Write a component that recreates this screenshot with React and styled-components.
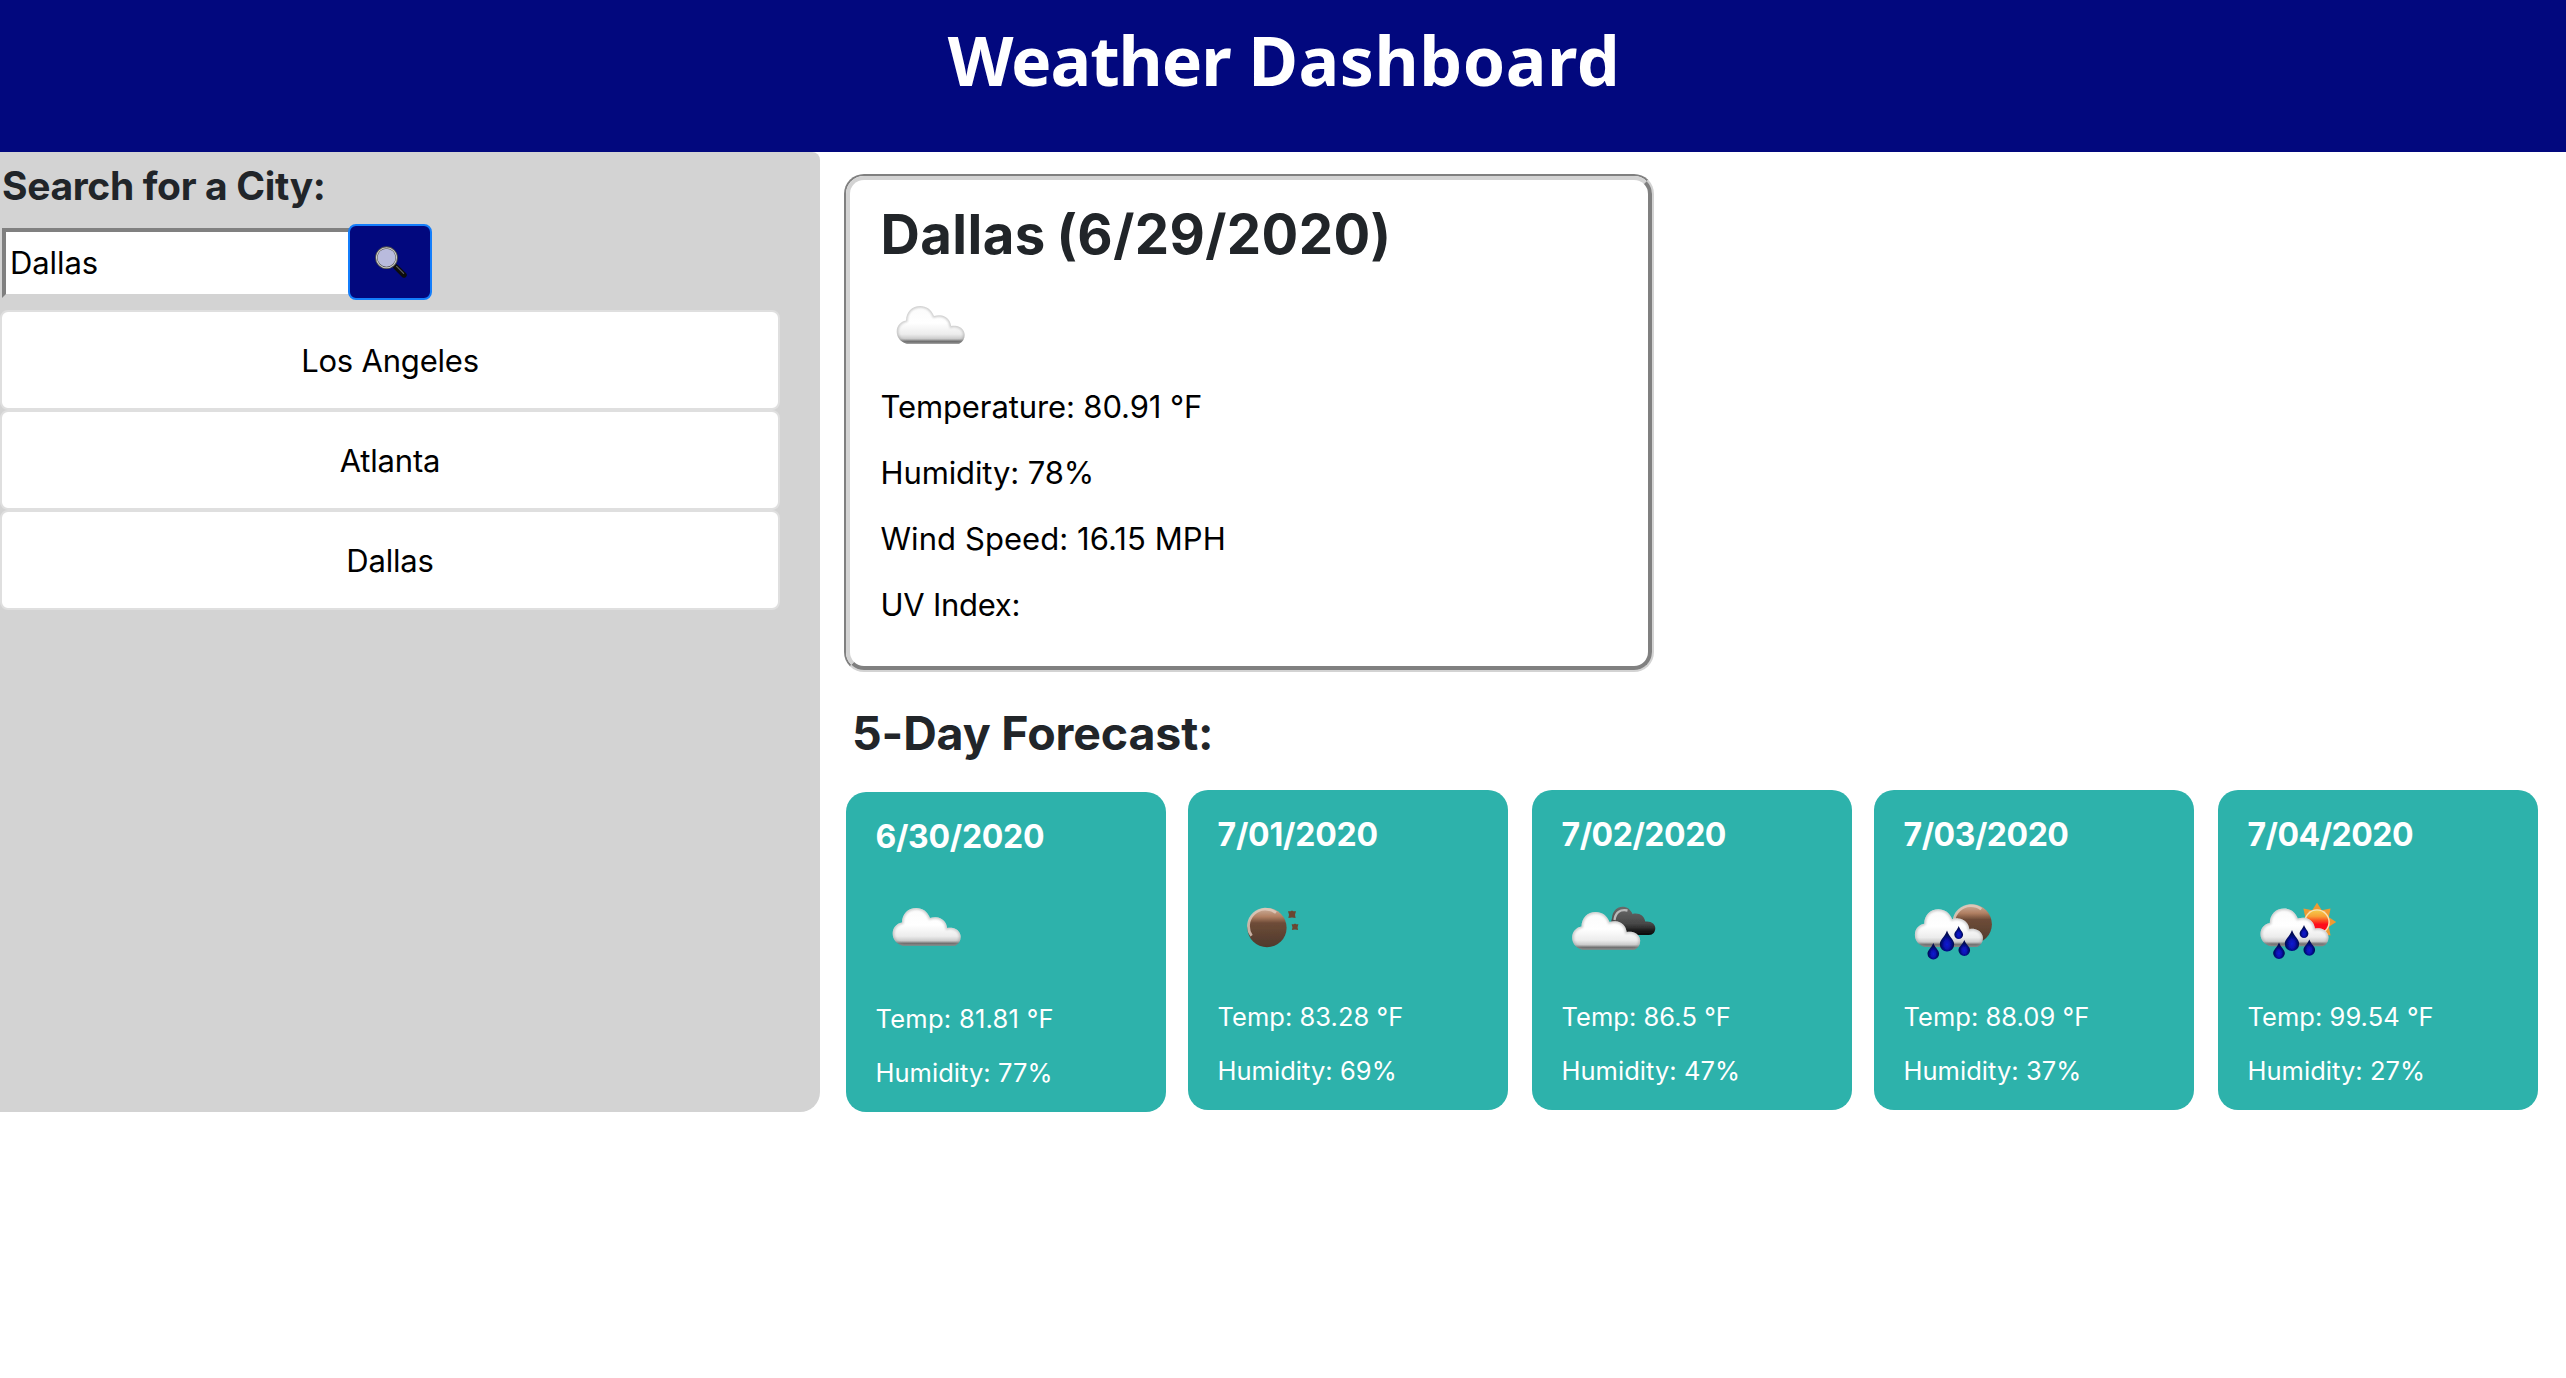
import React from 'react';
import styled, { createGlobalStyle } from 'styled-components';

const navy = '#02087e';
const teal = '#2db2ab';
const ink = '#212529';

const GlobalStyle = createGlobalStyle`
  *, *::before, *::after { box-sizing: border-box; }
  body {
    margin: 0;
    background: #fff;
    color: #000;
    font-family: Inter, "Liberation Sans", sans-serif;
  }
  h1, h2, h3, h4, p { margin: 0; }
`;

const Header = styled.header`
  height: 152px;
  padding-left: 2px;
  background: ${navy};
  text-align: center;
`;

const Title = styled.h1`
  font: 700 68px/120px "Noto Sans", "Open Sans", sans-serif;
  color: #fff;
`;

const TitleWord = styled.span`
  letter-spacing: ${(p) => p.$tracking}px;
`;

const Body = styled.div`
  display: flex;
  align-items: flex-start;
`;

const Sidebar = styled.aside`
  width: 820px;
  height: 960px;
  padding-top: 10px;
  background: #d3d3d3;
  border-radius: 0 8px 20px 0;
`;

const SearchLabel = styled.h3`
  padding-left: 2px;
  font-size: 39px;
  line-height: 48px;
  letter-spacing: -0.35px;
  color: ${ink};
`;

const SearchForm = styled.form`
  display: flex;
  align-items: flex-start;
  margin-top: 14px;
  padding-left: 2px;
`;

const SearchInput = styled.input`
  width: 350px;
  height: 70px;
  margin: 4px -4px 0 0;
  padding: 0 4px 2px;
  border: 4px solid;
  border-color: #808080 #d3d3d3 #d3d3d3 #808080;
  border-radius: 0;
  background: #fff;
  color: #000;
  font: 400 31px Inter, sans-serif;
  letter-spacing: -0.1px;
  outline: none;
`;

const SearchButton = styled.button`
  position: relative;
  display: flex;
  align-items: center;
  justify-content: center;
  width: 84px;
  height: 76px;
  padding: 0 0 0 2px;
  border: 2px solid #147efb;
  border-radius: 8px;
  background: ${navy};
`;

const CityList = styled.div`
  display: flex;
  flex-direction: column;
  width: 780px;
  margin-top: 10px;
`;

const CityButton = styled.button`
  height: 100px;
  padding: 1px 0 0;
  border: 2px solid #dfdfdf;
  border-radius: 8px;
  background: #fff;
  color: #000;
  font: 400 31px Inter, sans-serif;
  letter-spacing: -0.2px;
`;

const Main = styled.main`
  padding: 22px 0 0 24px;
`;

const CurrentFrame = styled.section`
  width: 810px;
  height: 498px;
  border: 2px solid;
  border-color: #808080 #d3d3d3 #d3d3d3 #808080;
  border-radius: 20px;
`;

const CurrentInner = styled.div`
  height: 100%;
  padding: 20px 30px 0 30.5px;
  border: 4px solid;
  border-color: #d3d3d3 #808080 #808080 #d3d3d3;
  border-radius: 18px;
`;

const CityName = styled.h2`
  font-size: 54.5px;
  line-height: 68px;
  letter-spacing: 0.4px;
  word-spacing: -2.5px;
  color: ${ink};
`;

const CurrentIcon = styled.div`
  height: 100px;
  margin: 6px 0 9px -1px;
`;

const Reading = styled.p`
  margin-bottom: 18px;
  font-size: 31px;
  line-height: 48px;
  letter-spacing: ${(p) => p.$tracking ?? -0.11}px;
`;

const ForecastTitle = styled.h2`
  margin-top: 32px;
  padding-left: 8px;
  font-size: 46.5px;
  line-height: 58px;
  letter-spacing: -0.15px;
  color: ${ink};
`;

const ForecastRow = styled.div`
  display: flex;
  align-items: flex-start;
  padding: 28px 0 0 2px;
`;

const DayCard = styled.article`
  width: 320px;
  height: 320px;
  margin-left: 22px;
  padding: 25px 0 0 29.5px;
  border-radius: 20px;
  background: ${teal};
  color: #fff;

  &:nth-child(odd) {
    margin-left: 24px;
  }
  &:first-child {
    margin: 2px 0 0;
  }
`;

const DayDate = styled.h4`
  font-size: 32px;
  line-height: 40px;
  letter-spacing: ${(p) => p.$tracking}px;
`;

const DayIcon = styled.div`
  height: 100px;
  margin: 19px 0 24px;
`;

const DayReading = styled.p`
  margin-bottom: 16px;
  font-size: 25.5px;
  line-height: 38px;
  letter-spacing: ${(p) => p.$tracking ?? 0.04}px;
`;

const Glyph = styled.svg`
  display: block;
  width: ${(p) => p.$size}px;
  height: ${(p) => p.$size}px;
`;

const CLOUD =
  'M27 69.7C20 68 16.7 63 16.7 57.5C16.7 52 20.5 47.5 26 46.5C26 38 32 32 40.3 32C46.5 32 51.5 35.5 54 42C56 41.3 58 41 60 41.2C66 41.5 70.5 46 71.2 52C73 51.5 75 51.5 77 52C81.5 53 84.7 56.5 84.7 60.8C84.7 65 82.5 68 79 69.7Z';

function IconDefs() {
  return (
    <Glyph $size={0} aria-hidden="true">
      <defs>
        <linearGradient id="cloudFill" x1="0" y1="0" x2="0" y2="1">
          <stop offset="0" stopColor="#fbfbfb" />
          <stop offset=".45" stopColor="#fff" />
          <stop offset=".75" stopColor="#ececec" />
          <stop offset=".87" stopColor="#cbcbcb" />
          <stop offset=".94" stopColor="#6c6c6c" />
          <stop offset="1" stopColor="#7d7d7d" />
        </linearGradient>
        <linearGradient id="darkCloudFill" x1="0" y1="0" x2="0" y2="1">
          <stop offset="0" stopColor="#6a6a6a" />
          <stop offset=".6" stopColor="#484848" />
          <stop offset=".85" stopColor="#1c1c1c" />
          <stop offset="1" stopColor="#050505" />
        </linearGradient>
        <linearGradient id="moonFill" x1="0" y1="0" x2="0" y2="1">
          <stop offset="0" stopColor="#cdb09c" />
          <stop offset=".22" stopColor="#b07f62" />
          <stop offset=".38" stopColor="#6e4c38" />
          <stop offset="1" stopColor="#4e392c" />
        </linearGradient>
        <linearGradient id="sunFill" x1="0" y1="0" x2="0" y2="1">
          <stop offset="0" stopColor="#f3c94a" />
          <stop offset=".25" stopColor="#f9a136" />
          <stop offset=".45" stopColor="#fb4a22" />
          <stop offset=".6" stopColor="#fe101c" />
          <stop offset="1" stopColor="#fe101c" />
        </linearGradient>
        <radialGradient id="dropFill" cx=".5" cy=".66" r=".46">
          <stop offset="0" stopColor="#0a1cd4" />
          <stop offset=".5" stopColor="#0711ac" />
          <stop offset="1" stopColor="#040853" />
        </radialGradient>
        <filter id="soft" x="-10%" y="-10%" width="120%" height="120%">
          <feGaussianBlur stdDeviation=".7" />
        </filter>
        <filter id="rim" x="-10%" y="-10%" width="120%" height="120%">
          <feGaussianBlur stdDeviation="1.2" />
        </filter>
        <clipPath id="cloudClip">
          <path d={CLOUD} />
        </clipPath>
      </defs>
    </Glyph>
  );
}

const Cloud = ({ x = 0, y = 0 }) => (
  <g transform={`translate(${x} ${y})`}>
    <path d={CLOUD} fill="url(#cloudFill)" />
    <g clipPath="url(#cloudClip)">
      <path d={CLOUD} fill="none" stroke="#9a9a9a" strokeWidth="3" opacity=".5" filter="url(#rim)" />
    </g>
  </g>
);

const Moon = ({ x, y }) => (
  <g transform={`translate(${x} ${y})`}>
    <circle r="19.6" fill="url(#moonFill)" />
    <path d="M-15.5 8A17 17 0 0 1 9 -15" fill="none" stroke="#e2cdbf" strokeWidth="2.8" opacity=".8" />
  </g>
);

const Drop = ({ x, top, bottom, w }) => {
  const r = w / 2;
  const cy = bottom - r;
  return (
    <path
      d={`M${x} ${top}C${x + r * 0.35} ${top + (cy - top) * 0.5} ${x + r} ${cy - r * 0.6} ${x + r} ${cy}A${r} ${r} 0 0 1 ${x - r} ${cy}C${x - r} ${cy - r * 0.6} ${x - r * 0.35} ${top + (cy - top) * 0.5} ${x} ${top}Z`}
      fill="url(#dropFill)"
    />
  );
};

const Star = ({ x, y, r }) => (
  <path
    transform={`translate(${x} ${y}) scale(${r})`}
    d="M0-1L.35-.8L1-.8L.75.05L.9.9L0 .75L-.9.9L-.75.05L-1-.8L-.35-.8Z"
    fill="#6b4632"
  />
);

const Sun = ({ x, y }) => (
  <g transform={`translate(${x} ${y})`}>
    {[0, 45, 90, 135, 180, 225, 270, 315].map((a) => (
      <path key={a} transform={`rotate(${a})`} d="M-5-11.5L0-19.2L5-11.5Z" fill="#f09a30" />
    ))}
    <circle r="12.8" fill="#fbe3b5" />
    <circle r="11.4" fill="url(#sunFill)" />
  </g>
);

const scenes = {
  clouds: <Cloud />,
  clearNight: (
    <>
      <Moon x={49} y={53.7} />
      <Star x={74} y={40.5} r={4} />
      <Star x={77} y={53} r={3.4} />
    </>
  ),
  brokenClouds: (
    <>
      <path
        d="M50 61C48 56 48 50 50 44C50.5 37 55 32.7 60.5 32.7C65 32.7 68.5 35.2 70.5 40C77 38.4 82 41.5 83.3 47.5C89.5 46.8 93.3 50 93.3 54.3C93.3 58 91 61 87 61Z"
        fill="url(#darkCloudFill)"
      />
      <path d="M52.5 46C53.5 38.5 58 35 65.5 36.5" fill="none" stroke="#b9b9b9" strokeWidth="2.4" />
      <Cloud x={-6.5} y={6} />
    </>
  ),
  rainNight: (
    <>
      <Moon x={68.3} y={50.2} />
      <Cloud x={-5.8} y={3.2} />
      <Drop x={29.3} top={69} bottom={85.5} w={11.6} />
      <Drop x={43} top={56.5} bottom={77.5} w={14.4} />
      <Drop x={54.7} top={52} bottom={65} w={8.8} />
      <Drop x={60.3} top={66} bottom={82} w={11.6} />
    </>
  ),
  rainDay: (
    <>
      <Sun x={69} y={48} />
      <Cloud x={-4.2} y={2.6} />
      <Drop x={31} top={68.5} bottom={85} w={11.6} />
      <Drop x={44} top={56} bottom={77} w={14.4} />
      <Drop x={56} top={51} bottom={64} w={8.8} />
      <Drop x={61.3} top={65.5} bottom={81.7} w={11.6} />
    </>
  ),
};

const WeatherIcon = ({ kind }) => (
  <Glyph $size={100} viewBox="0 0 100 100">
    <g filter="url(#soft)">{scenes[kind]}</g>
  </Glyph>
);

const MagnifierIcon = () => (
  <Glyph $size={32} viewBox="0 0 32 32">
    <path d="M17.5 17.5L22 22" stroke="#8b8b8b" strokeWidth="3" />
    <path d="M20.8 20.8L29 29" stroke="#0c0c0c" strokeWidth="5.4" strokeLinecap="round" />
    <path d="M21.6 20.4L28.6 27.4" stroke="#5c5c5c" strokeWidth="1.2" strokeLinecap="round" />
    <circle cx="11.5" cy="11.7" r="10.2" fill="#b9bbdd" stroke="#4d4d4d" strokeWidth="2.4" />
    <circle cx="11.5" cy="11.7" r="10" fill="none" stroke="#c9c9c4" strokeWidth="1.1" />
  </Glyph>
);

const cities = ['Los Angeles', 'Atlanta', 'Dallas'];

const readings = [
  { text: 'Temperature: 80.91 °F' },
  { text: 'Humidity: 78%' },
  { text: 'Wind Speed: 16.15 MPH', tracking: 0.07 },
  { text: 'UV Index:', tracking: -0.26 },
];

const days = [
  { date: '6/30/2020', icon: 'clouds', temp: '81.81', humidity: 77, dateTracking: -0.29, tempTracking: 0.26 },
  { date: '7/01/2020', icon: 'clearNight', temp: '83.28', humidity: 69, dateTracking: -0.22 },
  { date: '7/02/2020', icon: 'brokenClouds', temp: '86.5', humidity: 47, dateTracking: -0.47 },
  { date: '7/03/2020', icon: 'rainNight', temp: '88.09', humidity: 37, dateTracking: -0.47 },
  { date: '7/04/2020', icon: 'rainDay', temp: '99.54', humidity: 27, dateTracking: -0.52 },
];

export default function App() {
  return (
    <>
      <GlobalStyle />
      <Header>
        <Title>
          <TitleWord $tracking={-1.1}>Weather</TitleWord>{' '}
          <TitleWord $tracking={0.55}>Dashboard</TitleWord>
        </Title>
      </Header>
      <Body>
        <Sidebar>
          <SearchLabel>Search for a City:</SearchLabel>
          <SearchForm onSubmit={(e) => e.preventDefault()}>
            <SearchInput defaultValue="Dallas" aria-label="City" />
            <SearchButton type="submit" aria-label="Search">
              <MagnifierIcon />
            </SearchButton>
          </SearchForm>
          <CityList>
            {cities.map((city) => (
              <CityButton key={city}>{city}</CityButton>
            ))}
          </CityList>
        </Sidebar>
        <Main>
          <CurrentFrame>
            <CurrentInner>
              <CityName>Dallas (6/29/2020)</CityName>
              <CurrentIcon>
                <WeatherIcon kind="clouds" />
              </CurrentIcon>
              {readings.map((r) => (
                <Reading key={r.text} $tracking={r.tracking}>
                  {r.text}
                </Reading>
              ))}
            </CurrentInner>
          </CurrentFrame>
          <ForecastTitle>5-Day Forecast:</ForecastTitle>
          <ForecastRow>
            {days.map((d) => (
              <DayCard key={d.date}>
                <DayDate $tracking={d.dateTracking}>{d.date}</DayDate>
                <DayIcon>
                  <WeatherIcon kind={d.icon} />
                </DayIcon>
                <DayReading $tracking={d.tempTracking}>Temp: {d.temp} °F</DayReading>
                <DayReading>Humidity: {d.humidity}%</DayReading>
              </DayCard>
            ))}
          </ForecastRow>
        </Main>
      </Body>
      <IconDefs />
    </>
  );
}
